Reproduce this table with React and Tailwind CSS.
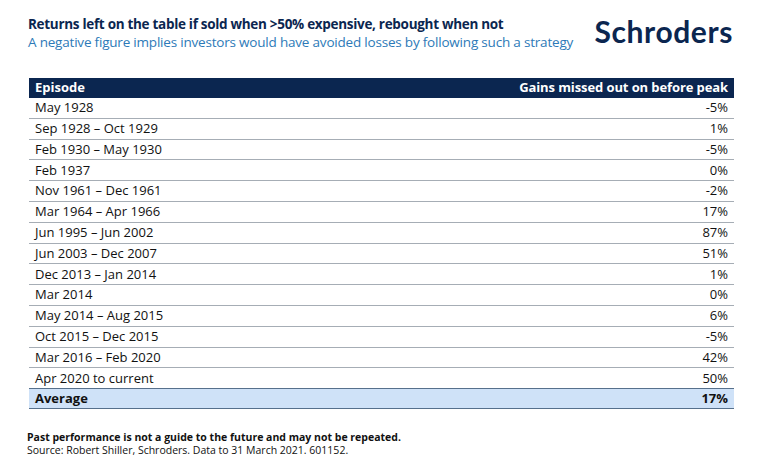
import React from "react";

const rows = [
  ["May 1928", "-5%"],
  ["Sep 1928 – Oct 1929", "1%"],
  ["Feb 1930 – May 1930", "-5%"],
  ["Feb 1937", "0%"],
  ["Nov 1961 – Dec 1961", "-2%"],
  ["Mar 1964 – Apr 1966", "17%"],
  ["Jun 1995 – Jun 2002", "87%"],
  ["Jun 2003 – Dec 2007", "51%"],
  ["Dec 2013 – Jan 2014", "1%"],
  ["Mar 2014", "0%"],
  ["May 2014 – Aug 2015", "6%"],
  ["Oct 2015 – Dec 2015", "-5%"],
  ["Mar 2016 – Feb 2020", "42%"],
  ["Apr 2020 to current", "50%"],
];

export default function App() {
  return (
    <div
      className="w-[758px] h-[462px] bg-white overflow-hidden pl-[28px] pr-[24px] pt-[14px] text-[#111]"
      style={{ fontFamily: '"Open Sans", "Noto Sans", sans-serif' }}
    >
      <div className="flex items-start justify-between">
        <div className="leading-[18px] pt-[1px]">
          <div className="text-[13.5px] font-bold text-[#0b2650] tracking-[-0.3px]">
            Returns left on the table if sold when &gt;50% expensive, rebought when not
          </div>
          <div className="text-[13.5px] text-[#2d7ab8] tracking-[-0.2px]">
            A negative figure implies investors would have avoided losses by following such a strategy
          </div>
        </div>
        <div
          className="text-[30px] font-bold text-[#0b2650] leading-none mt-[2px] mr-[1px] tracking-[0.6px]"
          style={{ fontFamily: "Lato, sans-serif" }}
        >
          Schroders
        </div>
      </div>

      <div className="mt-[27px] ml-[1px] w-[705px] text-[13px]">
        <div className="flex items-center justify-between h-[20px] bg-[#0b2650] text-white font-bold px-[6px]">
          <span>Episode</span>
          <span className="tracking-[-0.1px]">Gains missed out on before peak</span>
        </div>
        {rows.map(([ep, val]) => (
          <div
            key={ep}
            className="flex items-center justify-between h-[20.8px] border-b border-[#a6adb5] px-[6px]"
          >
            <span>{ep}</span>
            <span>{val}</span>
          </div>
        ))}
        <div className="flex items-center justify-between h-[21px] bg-[#cfe2f8] border-t border-b border-[#56708c] -mt-px px-[6px] font-bold">
          <span>Average</span>
          <span>17%</span>
        </div>
      </div>

      <div className="mt-[22px] text-[10.5px] leading-[13px] -ml-[1px]">
        <div className="font-bold">Past performance is not a guide to the future and may not be repeated.</div>
        <div>Source: Robert Shiller, Schroders. Data to 31 March 2021. 601152.</div>
      </div>
    </div>
  );
}
